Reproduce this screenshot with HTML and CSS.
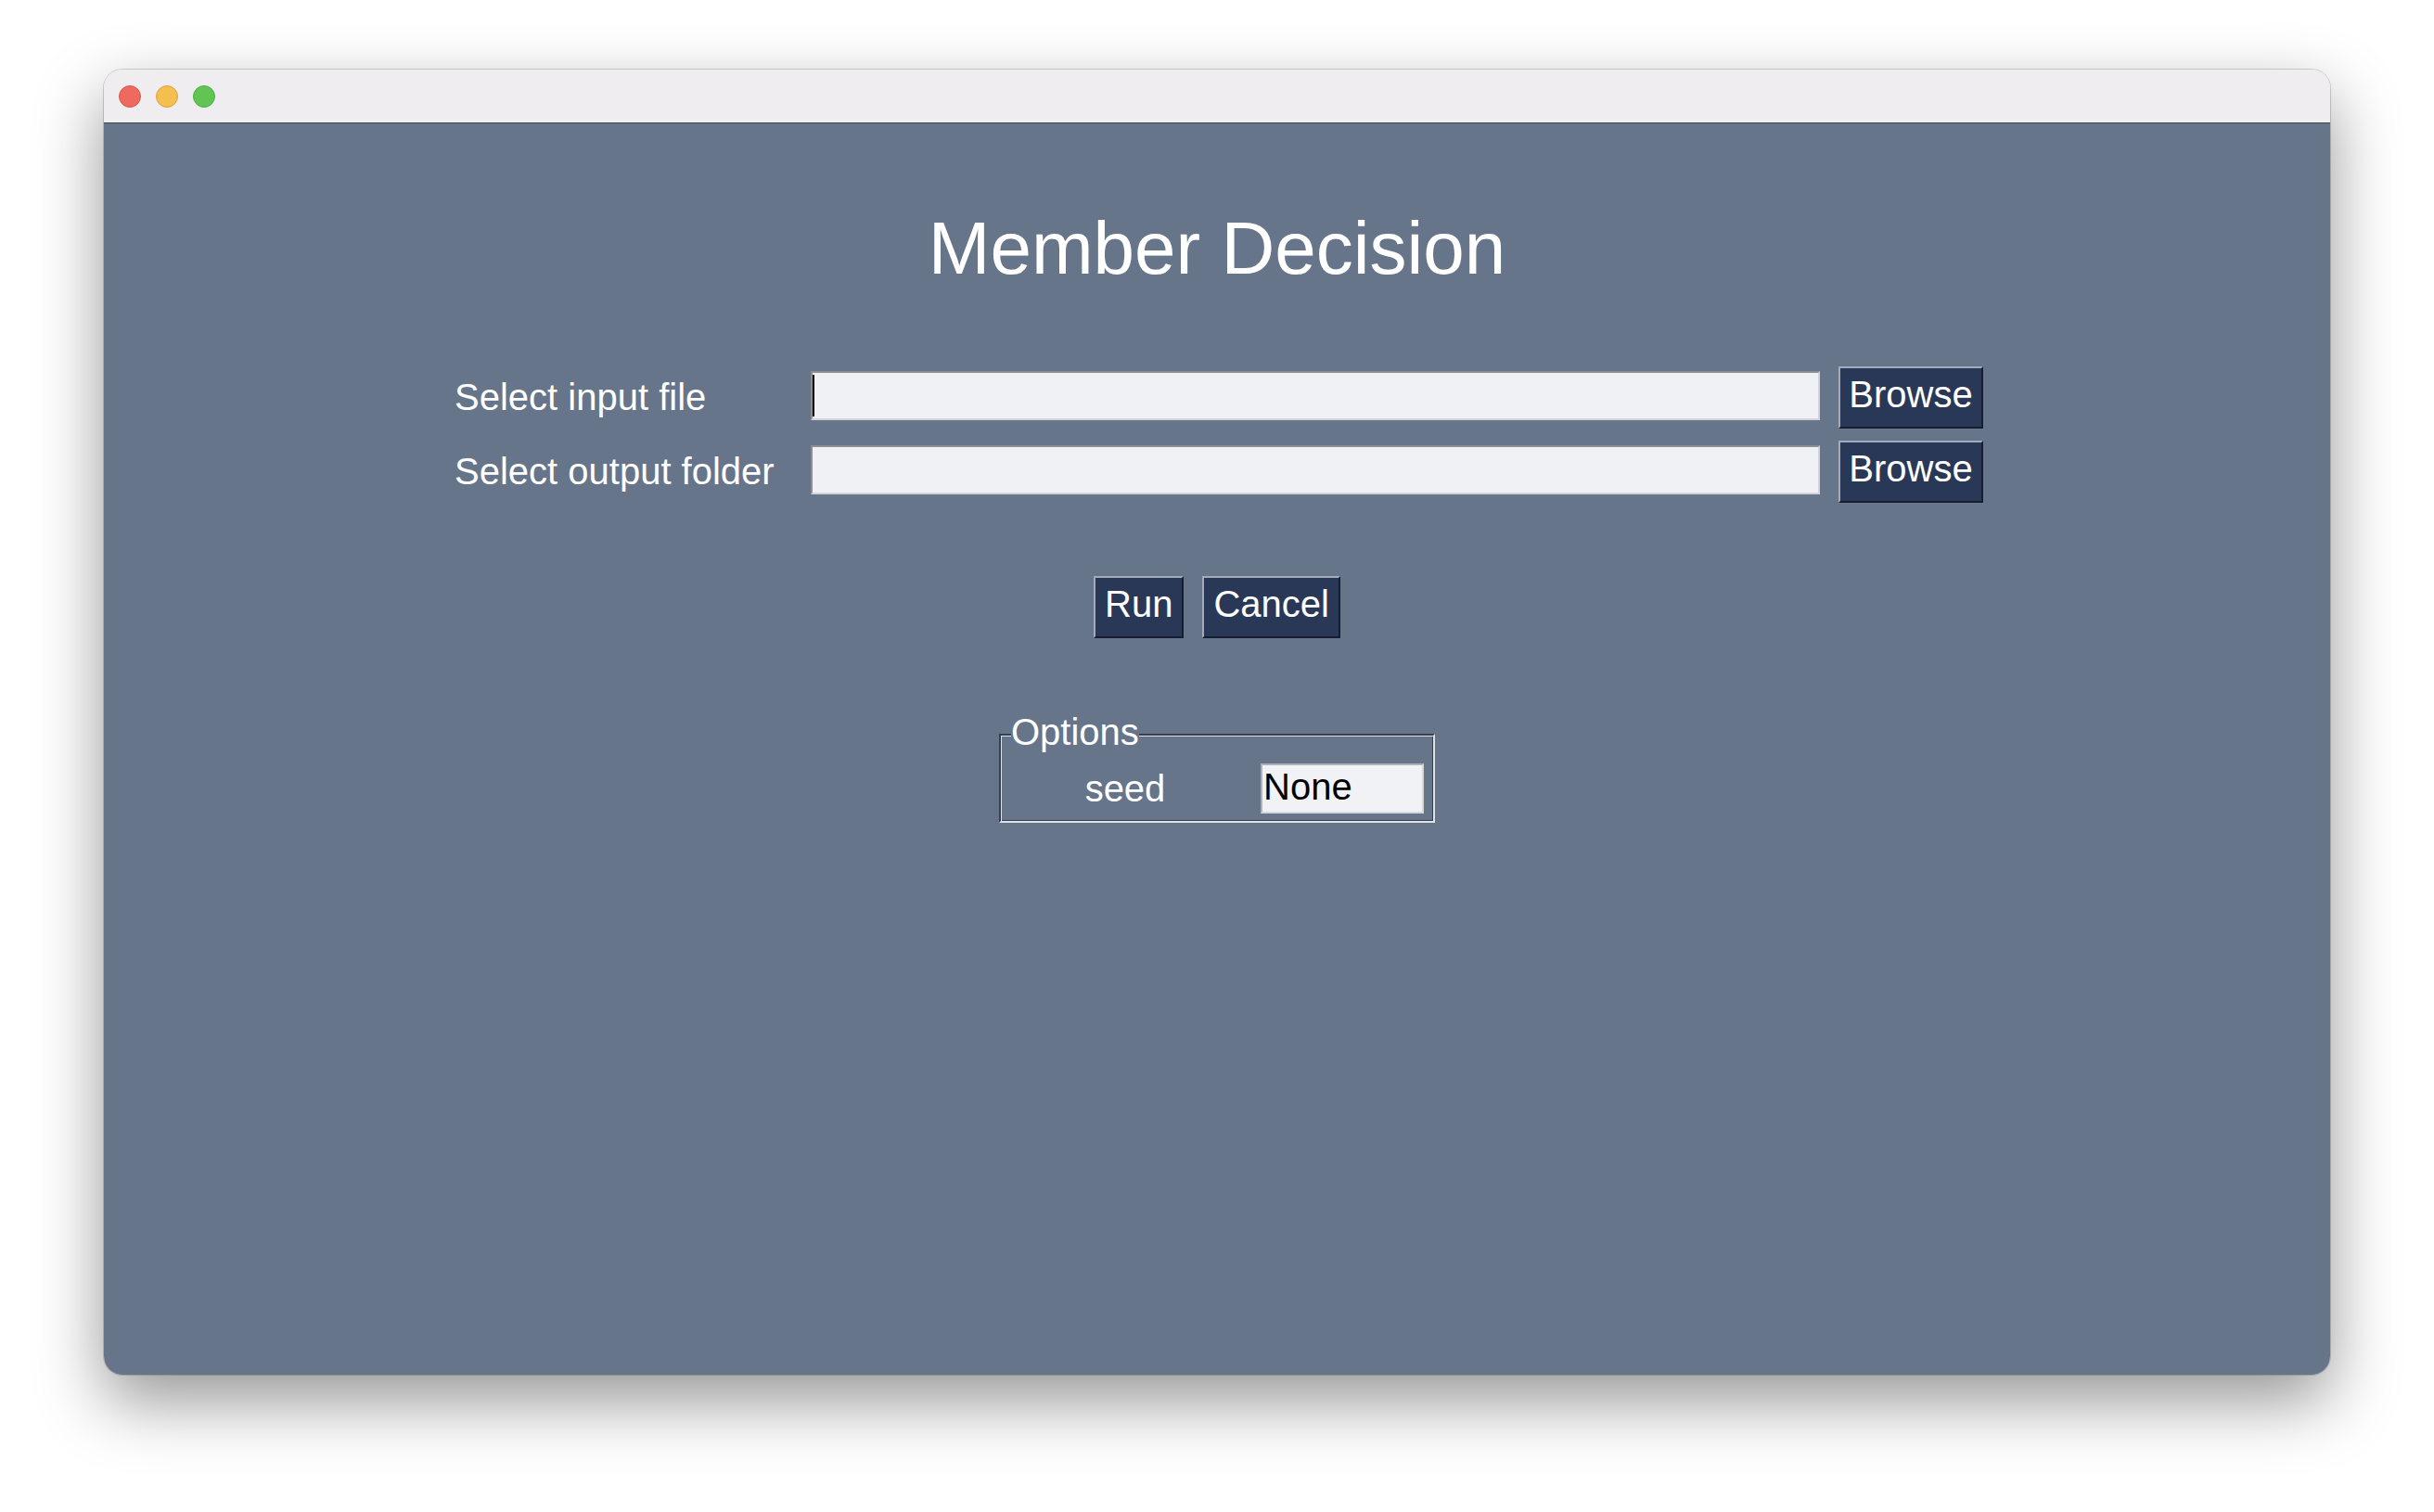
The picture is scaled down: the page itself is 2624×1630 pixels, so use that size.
FILE: index.html
```html
<!DOCTYPE html>
<html lang="en">
<head>
<meta charset="utf-8">
<title>Member Decision</title>
<link rel="stylesheet" href="styles.css">
</head>
<body>
  <div class="window">
    <div class="titlebar">
      <span class="light red"></span>
      <span class="light yellow"></span>
      <span class="light green"></span>
    </div>
    <main class="content">
      <h1 class="title">Member Decision</h1>
      <div class="file-grid">
        <div class="label">Select input file</div>
        <div class="field"><span class="caret"></span></div>
        <button class="btn" type="button">Browse</button>
        <div class="label">Select output folder</div>
        <div class="field"></div>
        <button class="btn" type="button">Browse</button>
      </div>
      <div class="actions">
        <button class="btn" type="button">Run</button>
        <button class="btn" type="button">Cancel</button>
      </div>
      <fieldset class="options">
        <legend class="options-legend">Options</legend>
        <div class="opt-row">
          <div class="opt-label">seed</div>
          <div class="opt-entry">None</div>
        </div>
      </fieldset>
    </main>
  </div>
</body>
</html>
```
FILE: styles.css
```css
html, body {
  margin: 0;
  padding: 0;
}
body {
  background: #ffffff;
  padding: 75px 0 0 112px;
  font-family: "Liberation Sans", Arial, Helvetica, sans-serif;
  width: 2624px;
  height: 1630px;
  box-sizing: border-box;
  overflow: hidden;
}
.window {
  width: 2400px;
  height: 1407px;
  border-radius: 20px;
  overflow: hidden;
  display: flex;
  flex-direction: column;
  box-shadow: 0 28px 72px rgba(0, 0, 0, 0.42), 0 0 0 1px rgba(0, 0, 0, 0.16);
}
.titlebar {
  height: 57px;
  flex: none;
  background: #efedf0;
  border-bottom: 1px solid #3d4452;
  display: flex;
  align-items: center;
  gap: 16px;
  padding-left: 16px;
}
.light {
  width: 24px;
  height: 24px;
  border-radius: 50%;
  box-sizing: border-box;
}
.red { background: #ee6a5f; border: 1px solid #d5574d; }
.yellow { background: #f5bf4f; border: 1px solid #d9a23d; }
.green { background: #61c554; border: 1px solid #4fad43; }

.content {
  flex: 1;
  background: #67758b;
  color: #ffffff;
  display: flex;
  flex-direction: column;
  align-items: center;
  padding-top: 95px;
}
.title {
  margin: 0;
  font-weight: normal;
  font-size: 80px;
  line-height: 80px;
}
.file-grid {
  margin-top: 87px;
  display: grid;
  grid-template-columns: 364px 1088px 156px;
  grid-auto-rows: 67px;
  column-gap: 20px;
  row-gap: 13px;
  padding-left: 4px;
}
.label {
  font-size: 40px;
  line-height: 67px;
  white-space: nowrap;
}
.field {
  margin-top: 5px;
  height: 53px;
  box-sizing: border-box;
  background: #f0f1f5;
  border: 2px solid;
  border-color: #8b8e94 #d3d4d8 #d3d4d8 #8b8e94;
  display: flex;
  align-items: flex-start;
}
.caret {
  width: 2px;
  height: 45px;
  margin-top: 2px;
  background: #000000;
}
.btn {
  height: 67px;
  box-sizing: border-box;
  margin: 0;
  padding: 0 10px 6px;
  border: 2px solid;
  border-color: #a3abb9 #151d30 #151d30 #a3abb9;
  background: #2a3857;
  color: #ffffff;
  font-family: "Liberation Sans", Arial, Helvetica, sans-serif;
  font-size: 40px;
  line-height: 57px;
  white-space: nowrap;
}
.file-grid .btn {
  width: 156px;
  padding: 0 0 6px;
}
.actions {
  margin-top: 79px;
  display: flex;
  gap: 20px;
}
.options {
  margin: 81px 0 0;
  width: 470px;
  box-sizing: border-box;
  padding: 8px 10px 8px 0;
  border: 2px solid;
  border-color: #363f4f #dfe2e7 #dfe2e7 #363f4f;
  box-shadow: inset 1px 1px 0 #dfe2e7, inset -1px -1px 0 #363f4f;
  min-width: 0;
}
.options-legend {
  margin-left: 11px;
  padding: 0 0 6px;
  font-size: 40px;
  line-height: 40px;
  background: #67758b;
}
.opt-row {
  display: grid;
  grid-template-columns: 268px 176px;
  column-gap: 12px;
  height: 54px;
}
.opt-label {
  text-align: center;
  font-size: 40px;
  line-height: 54px;
}
.opt-entry {
  height: 54px;
  box-sizing: border-box;
  background: #f1f2f6;
  border: 2px solid;
  border-color: #aeb0b5 #d6d7db #d6d7db #aeb0b5;
  color: #000000;
  font-size: 40px;
  line-height: 46px;
  padding: 0 0 4px 1px;
}
```
